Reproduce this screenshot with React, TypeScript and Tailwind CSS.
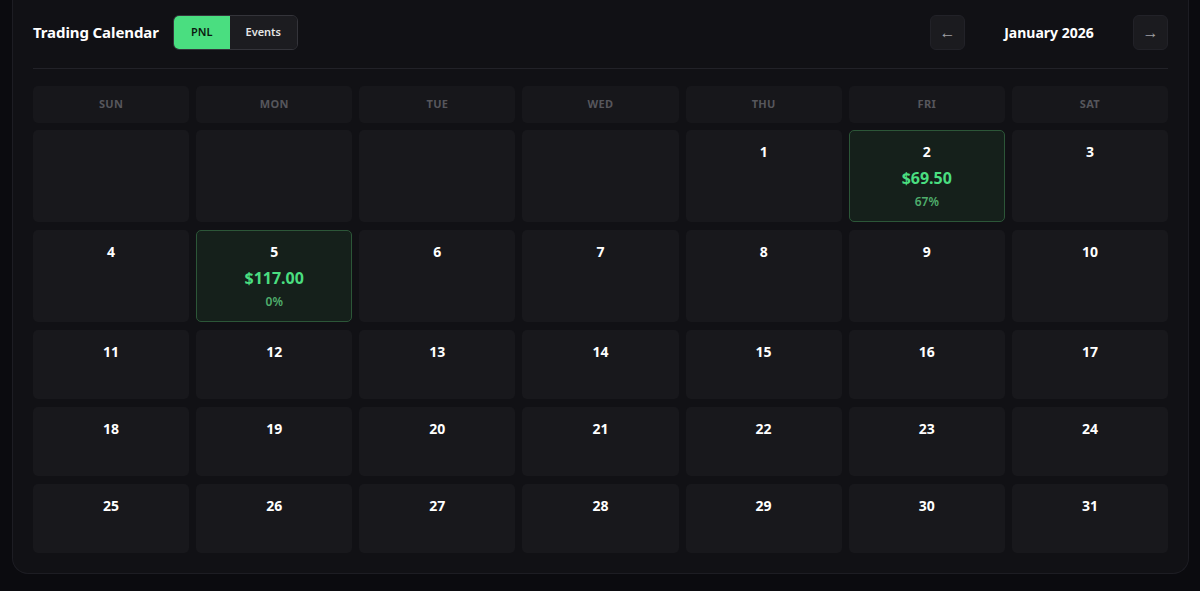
import React from "react";

type Day = { d: number; pnl?: string; pct?: string } | null;

const days: Day[] = [
  null, null, null, null,
  { d: 1 }, { d: 2, pnl: "$69.50", pct: "67%" }, { d: 3 },
  { d: 4 }, { d: 5, pnl: "$117.00", pct: "0%" }, { d: 6 }, { d: 7 }, { d: 8 }, { d: 9 }, { d: 10 },
  ...Array.from({ length: 21 }, (_, i) => ({ d: 11 + i })),
];

const weekdays = ["SUN", "MON", "TUE", "WED", "THU", "FRI", "SAT"];

export default function App() {
  return (
    <div
      className="w-[1200px] h-[591px] bg-[#0b0b0f] overflow-hidden"
      style={{ fontFamily: '"Noto Sans", "Open Sans", sans-serif' }}
    >
      <div className="ml-[12px] w-[1177px] h-[574px] bg-[#111115] border border-t-0 border-[#1d1d23] rounded-b-[16px] px-[20px] pt-[15px]">
        <div className="flex items-center justify-between h-[35px]">
          <div className="flex items-center gap-[14px]">
            <h1 className="text-[15px] font-bold text-white tracking-[-0.1px]">Trading Calendar</h1>
            <div className="flex h-[35px] rounded-[6px] border border-[#34343a] overflow-hidden">
              <button className="w-[56px] bg-[#4ade80] text-[#0b1a10] text-[11px] font-semibold">PNL</button>
              <button className="w-[67px] bg-[#1c1c20] text-[#e5e5e5] text-[11px] font-semibold">Events</button>
            </div>
          </div>
          <div className="flex items-center">
            <button className="w-[35px] h-[35px] rounded-[6px] bg-[#1b1b1f] border border-[#222228] text-[#a0a0a6] text-[16px] leading-none flex items-center justify-center pb-[2px]">←</button>
            <div className="w-[168px] text-center text-[14px] font-bold text-white">January 2026</div>
            <button className="w-[35px] h-[35px] rounded-[6px] bg-[#1b1b1f] border border-[#222228] text-[#a0a0a6] text-[16px] leading-none flex items-center justify-center pb-[2px]">→</button>
          </div>
        </div>
        <div className="mt-[18px] h-px bg-[#222228]" />
        <div className="mt-[17px] grid grid-cols-7 gap-x-[7px]">
          {weekdays.map((w) => (
            <div key={w} className="h-[37px] rounded-[5px] bg-[#17171b] flex items-center justify-center text-[11px] font-bold text-[#56565c] tracking-[0.3px]">
              {w}
            </div>
          ))}
        </div>
        <div className="mt-[7px] grid grid-cols-7 gap-x-[7px] gap-y-[8px]">
          {days.map((day, i) => {
            if (!day) return <div key={i} className="min-h-[69px] rounded-[5px] bg-[#18181c]" />;
            const green = !!day.pnl;
            return (
              <div
                key={i}
                className={
                  green
                    ? "min-h-[69px] rounded-[5px] bg-[#15201b] border border-[#2c5638] flex flex-col items-center pt-[11px] pb-[10px]"
                    : "min-h-[69px] rounded-[5px] bg-[#18181c] flex flex-col items-center pt-[12px] pb-[11px]"
                }
              >
                <div className="text-[14px] font-bold text-white leading-[20px]">{day.d}</div>
                {green && (
                  <>
                    <div className="mt-[5px] text-[16px] font-bold text-[#4ade80] leading-[22px]">{day.pnl}</div>
                    <div className="mt-[4px] text-[12px] font-semibold text-[#4fae6c] leading-[18px]">{day.pct}</div>
                  </>
                )}
              </div>
            );
          })}
        </div>
      </div>
    </div>
  );
}
